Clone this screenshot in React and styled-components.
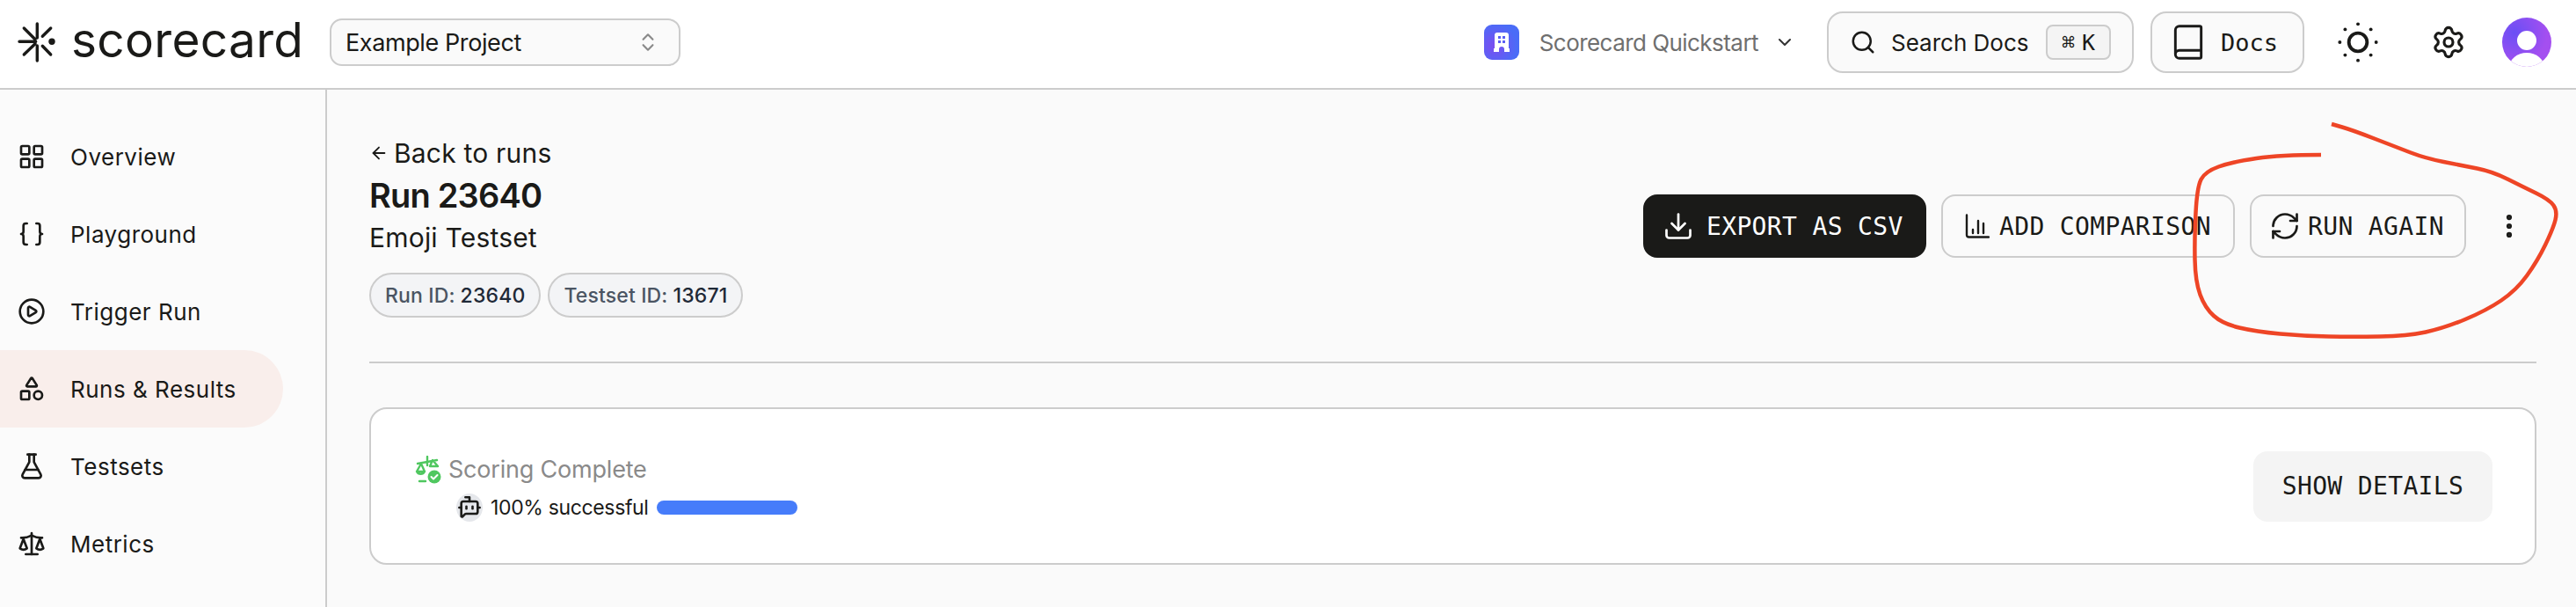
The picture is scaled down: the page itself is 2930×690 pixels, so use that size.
import React from 'react'
import styled, { createGlobalStyle } from 'styled-components'
import {
  LayoutGrid,
  Braces,
  CirclePlay,
  Shapes,
  FlaskConical,
  Scale,
  ChevronsUpDown,
  ChevronDown,
  Search,
  Book,
  SunDim,
  Settings,
  Download,
  RefreshCw,
  EllipsisVertical,
  ArrowLeft,
  BotMessageSquare
} from 'lucide-react'

const sans = `Inter, 'Liberation Sans', sans-serif`
const mono = `'DejaVu Sans Mono', 'Liberation Mono', monospace`

const GlobalStyle = createGlobalStyle`
  html, body {
    margin: 0;
    background: #fafafa;
    color: #1a1a18;
    font-family: ${sans};
  }
  * { box-sizing: border-box; }
`

const Page = styled.div`
  position: relative;
  width: 2930px;
  height: 690px;
  overflow: hidden;
  display: flex;
  flex-direction: column;
`
const Header = styled.header`
  height: 102px;
  flex: none;
  background: #fff;
  border-bottom: 2px solid #ccc;
  display: flex;
  align-items: center;
  padding: 0 28px 4px 20px;
`
const Logo = styled.div`
  display: flex;
  align-items: center;
  gap: 17px;
  width: 355px;
`
const LogoText = styled.span`
  font-size: 55px;
  line-height: 1;
  letter-spacing: 0.3px;
  margin-top: -6px;
`
const ProjectSelect = styled.div`
  width: 399px;
  height: 54px;
  background: #fafafa;
  border: 2px solid #ccc;
  border-radius: 14px;
  display: flex;
  align-items: center;
  justify-content: space-between;
  padding: 0 22px 0 16px;
  font-size: 27px;
  letter-spacing: -0.4px;
  color: #8a8a8a;
  span { color: #1a1a18; }
`
const Org = styled.div`
  margin-left: auto;
  display: flex;
  align-items: center;
  font-size: 26px;
  letter-spacing: -0.55px;
  color: #6f6f6f;
`
const OrgBadge = styled.div`
  width: 40px;
  height: 40px;
  border-radius: 9px;
  margin-right: 23px;
  background: radial-gradient(circle at 30% 60%, #7c4df0, #4a6cf7 70%);
  display: flex;
  align-items: center;
  justify-content: center;
`
const HeaderButton = styled.div`
  height: 70px;
  background: #fafafa;
  border: 2px solid #ccc;
  border-radius: 18px;
  display: flex;
  align-items: center;
  font-size: 26px;
  color: #1a1a18;
`
const SearchButton = styled(HeaderButton)`
  width: 349px;
  margin-left: 36px;
  padding: 0 24px;
  gap: 17px;
`
const Kbd = styled.div`
  margin-left: auto;
  width: 74px;
  height: 40px;
  border: 2px solid #ccc;
  border-radius: 8px;
  background: #f4f4f4;
  font-family: ${mono};
  font-size: 25px;
  display: flex;
  align-items: center;
  justify-content: center;
  gap: 8px;
`
const DocsButton = styled(HeaderButton)`
  width: 175px;
  margin-left: 19px;
  padding-left: 19px;
  gap: 15px;
  font-family: ${mono};
  font-size: 27px;
`
const IconSlot = styled.div`
  width: 40px;
  display: flex;
  justify-content: center;
  margin-left: ${p => p.$gap}px;
`
const Avatar = styled.div`
  width: 56px;
  height: 56px;
  margin-left: 41px;
  border-radius: 50%;
  overflow: hidden;
  position: relative;
  background: radial-gradient(circle at 25% 30%, #6a4ff5, #a44ff0 65%);
`
const AvatarHead = styled.div`
  position: absolute;
  left: 17px;
  top: 15px;
  width: 22px;
  height: 22px;
  border-radius: 50%;
  background: #fff;
`
const AvatarBody = styled.div`
  position: absolute;
  left: 8px;
  top: 40px;
  width: 40px;
  height: 34px;
  border-radius: 50%;
  background: #fff;
`
const Body = styled.div`
  flex: 1;
  display: flex;
  min-height: 0;
`
const Sidebar = styled.nav`
  width: 372px;
  flex: none;
  background: #fbfbfb;
  border-right: 2px solid #ccc;
  padding-top: 32px;
`
const NavItem = styled.div`
  width: 322px;
  height: 88px;
  display: flex;
  align-items: center;
  gap: 28px;
  padding-left: 20px;
  font-size: 26px;
  letter-spacing: 0.5px;
  border-radius: 0 44px 44px 0;
  background: ${p => (p.$active ? '#f9eeeb' : 'transparent')};
`
const Main = styled.main`
  flex: 1;
  padding: 52px 45px 0 48px;
  background: #fafafa;
`
const RunHead = styled.div`
  display: flex;
  justify-content: space-between;
  height: 259px;
  border-bottom: 2px solid #ccc;
`
const Titles = styled.div`
  display: flex;
  flex-direction: column;
  align-items: flex-start;
`
const BackLink = styled.div`
  height: 40px;
  display: flex;
  align-items: center;
  gap: 6px;
  font-size: 30px;
  letter-spacing: 0.2px;
`
const RunTitle = styled.h1`
  margin: 4px 0 0;
  font-size: 38px;
  line-height: 48px;
  font-weight: 600;
  letter-spacing: -0.8px;
`
const Subtitle = styled.div`
  margin-top: 4px;
  font-size: 30px;
  line-height: 40px;
  letter-spacing: 0.2px;
`
const Pills = styled.div`
  display: flex;
  gap: 8px;
  margin-top: 20px;
`
const Pill = styled.div`
  height: 51px;
  padding: 0 16px;
  border: 2px solid #ccc;
  border-radius: 26px;
  background: #f3f4f6;
  font-size: 23px;
  letter-spacing: 0.15px;
  font-weight: 500;
  color: #4b5563;
  display: flex;
  align-items: center;
  gap: 6px;
  b { font-weight: 500; color: #1f2937; }
`
const Actions = styled.div`
  display: flex;
  align-items: center;
  gap: 17px;
  height: 72px;
  margin-top: 67px;
`
const ActionButton = styled.div`
  height: 72px;
  width: ${p => p.$width}px;
  border-radius: 16px;
  border: 2px solid ${p => (p.$primary ? '#1a1a18' : '#ccc')};
  background: ${p => (p.$primary ? '#1a1a18' : 'transparent')};
  color: ${p => (p.$primary ? '#fff' : '#1a1a18')};
  font-family: ${mono};
  font-size: 28px;
  letter-spacing: 0.35px;
  white-space: nowrap;
  display: flex;
  align-items: center;
  padding-left: ${p => p.$pad}px;
  gap: ${p => p.$gap}px;
`
const MoreButton = styled.div`
  width: 44px;
  margin-left: 10px;
  margin-right: 9px;
  display: flex;
  justify-content: center;
`
const Card = styled.section`
  margin-top: 50px;
  height: 179px;
  background: #fff;
  border: 2px solid #ccc;
  border-radius: 20px;
  display: flex;
  align-items: center;
  justify-content: space-between;
  padding: 0 48px 0 50px;
`
const Status = styled.div`
  display: flex;
  flex-direction: column;
  gap: 9px;
  padding-top: 4px;
`
const StatusRow = styled.div`
  display: flex;
  align-items: center;
  gap: 8px;
  font-size: 27px;
  letter-spacing: -0.2px;
  line-height: 36px;
  color: #8a8a8a;
`
const RobotRow = styled.div`
  display: flex;
  align-items: center;
  margin-left: 47px;
  gap: 9px;
  font-size: 23px;
  letter-spacing: -0.35px;
  line-height: 32px;
  color: #1a1a18;
`
const RobotBadge = styled.div`
  width: 30px;
  height: 32px;
  border-radius: 50%;
  background: #e5e7eb;
  display: flex;
  align-items: center;
  justify-content: center;
`
const Bar = styled.div`
  width: 160px;
  height: 16px;
  border-radius: 8px;
  background: #467cfa;
`
const DetailsButton = styled.div`
  width: 272px;
  height: 80px;
  border-radius: 16px;
  background: #f4f4f4;
  font-family: ${mono};
  font-size: 28px;
  letter-spacing: 0.35px;
  display: flex;
  align-items: center;
  justify-content: center;
`
const Scribble = styled.svg`
  position: absolute;
  left: 0;
  top: 0;
  pointer-events: none;
`

const navItems = [
  { label: 'Overview', Icon: LayoutGrid },
  { label: 'Playground', Icon: Braces },
  { label: 'Trigger Run', Icon: CirclePlay },
  { label: 'Runs & Results', Icon: Shapes, active: true },
  { label: 'Testsets', Icon: FlaskConical },
  { label: 'Metrics', Icon: Scale }
]

function LogoMark () {
  return (
    <svg width='44' height='46' viewBox='0 0 44 46' fill='none' stroke='#1a1a18' strokeWidth='3.4' strokeLinecap='round'>
      <path d='M22.3 2v16M22.3 27v17M2 22.3h18.7M7.3 7L20 19.7M7.3 37L20 24.7M37.7 7l-9.4 9.3M37.7 37l-9.4-9.7' />
      <circle cx='39' cy='22.3' r='3.7' fill='#1a1a18' stroke='none' />
    </svg>
  )
}

function OrgIcon () {
  return (
    <svg width='18' height='22' viewBox='0 0 18 22' fill='#fff'>
      <path d='M1 3a3 3 0 0 1 3-3h10a3 3 0 0 1 3 3v15h1v4h-6v-3a3 3 0 0 0-6 0v3H0v-4h1z' />
      <g fill='#5a5ef4'>
        <rect x='5' y='4' width='3' height='3' />
        <rect x='10' y='4' width='3' height='3' />
        <rect x='5' y='9' width='3' height='3' />
        <rect x='10' y='9' width='3' height='3' />
      </g>
    </svg>
  )
}

function CompareIcon () {
  return (
    <svg width='28' height='28' viewBox='0 0 28 28' fill='none' stroke='currentColor' strokeWidth='2.4' strokeLinecap='round'>
      <path d='M2 1.5V24a2.5 2.5 0 0 0 2.5 2.5H27M9 18v4M15 8v14M21 11v11' />
    </svg>
  )
}

function ScoringIcon () {
  return (
    <svg width='30' height='32' viewBox='0 0 30 32' fill='none' stroke='#4fc75f' strokeWidth='2.4' strokeLinecap='round' strokeLinejoin='round'>
      <path d='M14 1v10M3 9l22-4M20 5l-3 7h9zM7 9l-5 9h9zM2 18a5 5 0 0 0 9 0M5 29h7' />
      <circle cx='22' cy='24' r='7.5' fill='#4fc75f' stroke='none' />
      <path d='M18.5 24l2.5 2.5 4.5-4.5' stroke='#fff' strokeWidth='2' />
    </svg>
  )
}

// red pen mark over the screenshot, points traced by hand
const penPoints = [
  [2640, 176], [2594, 176], [2539, 184], [2508, 195], [2499, 213], [2496, 270],
  [2497, 320], [2508, 350], [2528, 368], [2566, 377], [2621, 382], [2676, 383],
  [2738, 382], [2780, 373], [2828, 353], [2862, 330], [2886, 297], [2904, 260],
  [2909, 240], [2900, 227], [2869, 212], [2835, 195], [2800, 188], [2759, 180],
  [2725, 167], [2676, 148], [2652, 141]
]

function smoothPath (points) {
  let d = `M${points[0][0]} ${points[0][1]}`
  for (let i = 1; i < points.length - 1; i++) {
    const [x, y] = points[i]
    const [nx, ny] = points[i + 1]
    d += ` Q${x} ${y} ${(x + nx) / 2} ${(y + ny) / 2}`
  }
  const last = points[points.length - 1]
  return `${d} L${last[0]} ${last[1]}`
}

export default function App () {
  return (
    <Page>
      <GlobalStyle />
      <Header>
        <Logo>
          <LogoMark />
          <LogoText>scorecard</LogoText>
        </Logo>
        <ProjectSelect>
          <span>Example Project</span>
          <ChevronsUpDown size={26} strokeWidth={2} />
        </ProjectSelect>
        <Org>
          <OrgBadge><OrgIcon /></OrgBadge>
          Scorecard Quickstart
          <ChevronDown size={24} style={{ marginLeft: 18 }} color='#333' />
        </Org>
        <SearchButton>
          <Search size={30} strokeWidth={2} />
          Search Docs
          <Kbd><span>⌘</span><span>K</span></Kbd>
        </SearchButton>
        <DocsButton>
          <Book size={44} strokeWidth={1.6} />
          Docs
        </DocsButton>
        <IconSlot $gap={41}><SunDim size={62} strokeWidth={1.5} style={{ flex: 'none' }} /></IconSlot>
        <IconSlot $gap={63}><Settings size={42} strokeWidth={1.9} /></IconSlot>
        <Avatar>
          <AvatarHead />
          <AvatarBody />
        </Avatar>
      </Header>
      <Body>
        <Sidebar>
          {navItems.map(({ label, Icon, active }) => (
            <NavItem key={label} $active={active}>
              <Icon size={32} strokeWidth={2} />
              {label}
            </NavItem>
          ))}
        </Sidebar>
        <Main>
          <RunHead>
            <Titles>
              <BackLink><ArrowLeft size={22} strokeWidth={2} />Back to runs</BackLink>
              <RunTitle>Run 23640</RunTitle>
              <Subtitle>Emoji Testset</Subtitle>
              <Pills>
                <Pill>Run ID: <b>23640</b></Pill>
                <Pill>Testset ID: <b>13671</b></Pill>
              </Pills>
            </Titles>
            <Actions>
              <ActionButton $primary $width={322} $pad={20} $gap={14}>
                <Download size={36} strokeWidth={1.8} />
                EXPORT AS CSV
              </ActionButton>
              <ActionButton $width={334} $pad={25} $gap={11}>
                <CompareIcon />
                ADD COMPARISON
              </ActionButton>
              <ActionButton $width={246} $pad={20} $gap={8}>
                <RefreshCw size={36} strokeWidth={1.8} />
                RUN AGAIN
              </ActionButton>
              <MoreButton><EllipsisVertical size={34} strokeWidth={2.4} /></MoreButton>
            </Actions>
          </RunHead>
          <Card>
            <Status>
              <StatusRow><ScoringIcon />Scoring Complete</StatusRow>
              <RobotRow>
                <RobotBadge><BotMessageSquare size={28} strokeWidth={2.2} /></RobotBadge>
                100% successful
                <Bar />
              </RobotRow>
            </Status>
            <DetailsButton>SHOW DETAILS</DetailsButton>
          </Card>
        </Main>
      </Body>
      <Scribble width='2930' height='690' viewBox='0 0 2930 690' fill='none'>
        <path d={smoothPath(penPoints)} stroke='#ee4526' strokeWidth='4.5' />
      </Scribble>
    </Page>
  )
}
